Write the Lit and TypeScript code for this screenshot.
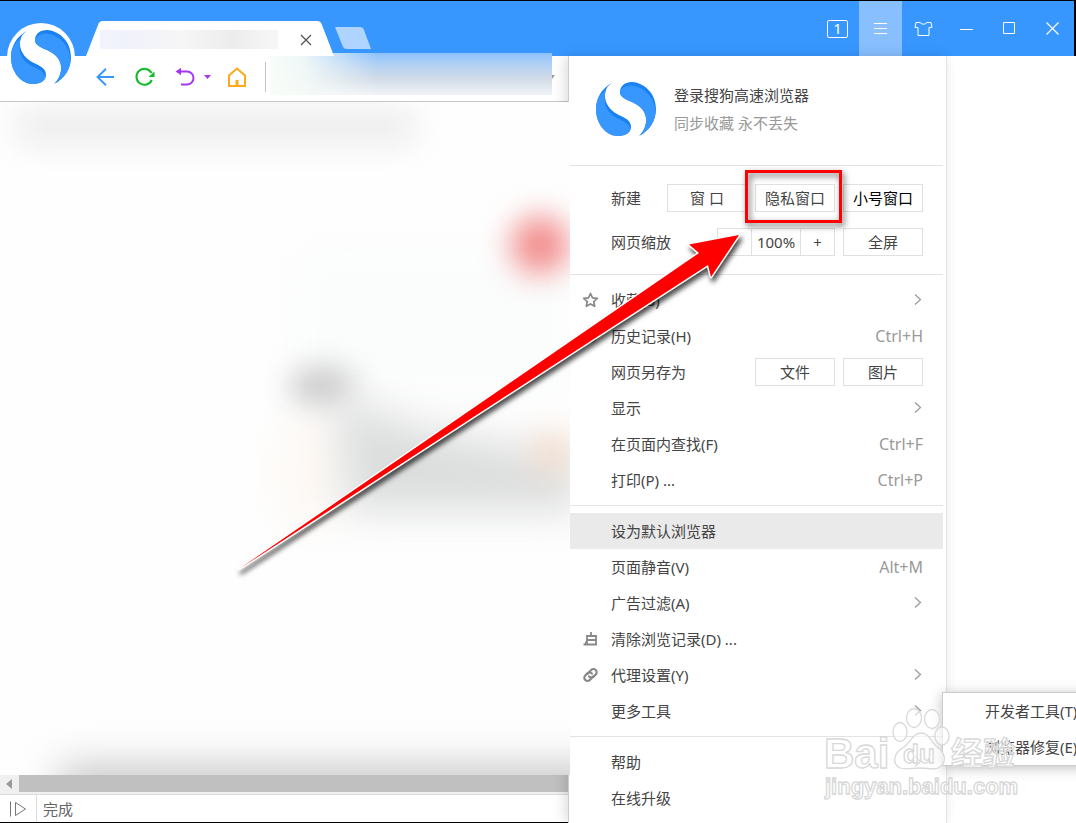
import { LitElement, html, svg, css, nothing } from "lit";
import { customElement, property } from "lit/decorators.js";

type Item = {
  label: string;
  icon?: unknown;
  key?: string;
  more?: boolean;
  active?: boolean;
};

const star = svg`<path d="M8 1.500l2 4.400 4.800.5-3.600 3.200 1 4.700L8 11.900l-4.200 2.400 1-4.700L1.200 6.400l4.800-.5z" fill="none" stroke="#888" stroke-width="1.700" stroke-linejoin="round"/>`;
const clock = svg`<circle cx="8" cy="8" r="6" fill="none" stroke="#888" stroke-width="1.800"/><path d="M8 4v4h3" fill="none" stroke="#888" stroke-width="1.500"/>`;
const brush = svg`<path d="M8.500 1v4M4.500 13V5h9v8M4.500 9h9M1 13.500H14.500M4.500 10L2.500 13.500" fill="none" stroke="#888" stroke-width="1.800"/>`;
const link = svg`<g transform="rotate(-45 8 8)" fill="none" stroke="#888" stroke-width="2.200" stroke-linecap="round"><path d="M9.500 11H4a3.200 3.200 0 0 1 0-6.400h3a3.200 3.200 0 0 1 3 3.400"/><path d="M6.500 5h5.500a3.200 3.200 0 0 1 0 6.400h-3a3.200 3.200 0 0 1-3-3.400"/></g>`;

@customElement("s-logo")
export class SLogo extends LitElement {
  static styles = css`
    :host {
      display: block;
      line-height: 0;
    }
  `;
  render() {
    const shape =
      "M16 1C6 6 0 16 0 27C0 43 11 54 22 54C30 54 35 50 35 45C35 39 31 37 25 34C15 30 9 22 9 14C9 8 11 4 16 1ZM36 0C50 1 60 13 60 27C60 39 53 49 43 54C48 49 51 42 50 36C49 27 42 23 36 20C29 17 24 15 24 10C24 4 29 0 36 0Z";
    return html`<svg width="60" height="54" viewBox="0 0 60 54" aria-hidden="true">
      <clipPath id="c"><path d=${shape} /></clipPath>
      <path d=${shape} fill="#1a82f0" />
      <g clip-path="url(#c)"><path d=${shape} fill="#3797ff" stroke="#3797ff" transform="translate(-1 4)" /></g>
    </svg>`;
  }
}

@customElement("menu-row")
export class MenuRow extends LitElement {
  @property({ attribute: false }) item!: Item;
  static styles = css`
    :host {
      display: block;
    }
    .row {
      display: flex;
      align-items: center;
      width: 100%;
      height: 36px;
      padding: 0 20px 0 12px;
      border: 0;
      background: none;
      font: inherit;
      color: #444;
      text-align: left;
    }
    .active {
      background: #eaeaea;
    }
    .icon {
      width: 17px;
      height: 16px;
      margin-right: 12px;
    }
    .label {
      flex: 1;
      white-space: nowrap;
    }
    .key {
      color: #999;
      font-size: 16px;
    }
  `;
  render() {
    const i = this.item;
    return html`<button class="row ${i.active ? "active" : ""}">
      <svg class="icon" viewBox="0 0 16 16" aria-hidden="true">${i.icon ?? nothing}</svg>
      <span class="label">${i.label}</span>
      ${i.key ? html`<span class="key">${i.key}</span>` : nothing}
      ${i.more
        ? html`<svg width="10" height="14" viewBox="0 0 10 14" aria-hidden="true">
            <path d="M2 1.500l5.500 5-5.500 5" fill="none" stroke="#999" stroke-width="1.200" />
          </svg>`
        : nothing}
    </button>`;
  }
}

@customElement("app-root")
export class AppRoot extends LitElement {
  static styles = css`
    :host {
      display: flex;
      flex-direction: column;
      position: relative;
      min-height: 100vh;
      box-sizing: border-box;
      overflow: hidden;
      background: #fff;
      color: #444;
      font: 15px/20px "Noto Sans", "Noto Sans CJK SC", sans-serif;
    }
    * {
      box-sizing: border-box;
    }
    button {
      font: inherit;
      color: inherit;
      padding: 0;
      border: 0;
      background: none;
    }
    svg {
      display: block;
    }
    .titlebar {
      display: flex;
      align-items: flex-end;
      height: 56px;
      padding-left: 86px;
      background: #3797ff;
      border-top: 1px solid #000;
      border-right: 2px solid #000;
    }
    .tab {
      display: flex;
      align-items: center;
      width: 249px;
      height: 35px;
      padding: 2px 20px 0 14px;
      background: #fff;
      clip-path: path("M0 35L12 4Q13 0 17 0H231Q235 0 236 4L248 35Z");
    }
    .tab-title {
      flex: 1;
      height: 19px;
      margin-right: 18px;
      background: linear-gradient(90deg, #f3f3fc, #f0f2fb 15%, #f6f6f6 45%, #ececec 75%, #f7f7f7);
    }
    .new-tab {
      height: 29px;
    }
    .new-tab svg {
      margin-bottom: 7px;
    }
    .window {
      display: flex;
      align-self: stretch;
      margin-left: auto;
    }
    .window button {
      display: grid;
      place-items: center;
      width: 43px;
    }
    .window .on {
      background: #87bfff;
    }
    .window .count {
      width: 21px;
      height: 18px;
      border: 1px solid #fff;
      border-radius: 2px;
      color: #fff;
      line-height: 15px;
      text-align: center;
    }
    .brand {
      position: absolute;
      left: 7px;
      top: 23px;
      width: 68px;
      height: 68px;
      padding: 7px 4px;
      border-radius: 50%;
      background: #fff;
      z-index: 1;
    }
    .body {
      display: flex;
      flex: 1;
    }
    .browser {
      display: flex;
      flex-direction: column;
      flex: 1;
      min-width: 0;
      border-bottom: 1px solid #000;
    }
    .toolbar {
      display: flex;
      align-items: center;
      height: 46px;
      padding: 0 12px 3px 93px;
      border-bottom: 1px solid #c6c6c6;
    }
    .tool {
      display: grid;
      place-items: center;
      width: 24px;
      height: 24px;
      margin-right: 16px;
    }
    .tool.tight {
      margin-right: 0;
    }
    .tool.caret {
      width: 20px;
      margin-right: 8px;
    }
    .address {
      flex: 1;
      min-width: 0;
      align-self: flex-start;
      height: 42px;
      margin-top: -3px;
      margin-left: 4px;
      border: 0;
      background: linear-gradient(90deg, #f8fdf8, rgba(246, 251, 248, 0.9) 12%, rgba(246, 251, 248, 0) 38%),
        linear-gradient(#8dc2fd, #b4d1f2 30%, #d2dce8 62%, #f1f4f8);
      outline: 0;
    }
    .sep {
      width: 1px;
      height: 30px;
      background: #c4c4c4;
    }
    .page {
      position: relative;
      flex: 1;
      margin-right: -2px;
      overflow: hidden;
      background: #fefefe;
      z-index: 1;
    }
    .page svg {
      position: absolute;
      inset: 0;
    }
    .scroll {
      display: flex;
      height: 19px;
      padding-bottom: 2px;
      background: #f0f0f0;
    }
    .scroll button {
      width: 19px;
      padding-left: 6px;
    }
    .thumb {
      flex: 1;
      background: #c0c0c0;
    }
    .status {
      display: flex;
      align-items: center;
      height: 28px;
      border-top: 1px solid #ddd;
      color: #666;
    }
    .status button {
      width: 37px;
      height: 27px;
      padding-left: 9px;
      margin-right: 6px;
      border-right: 1px solid #ddd;
    }
    .menu {
      position: relative;
      width: 379px;
      padding: 0 3px 0 1px;
      border-left: 1px solid #ccc;
      border-right: 1px solid #e3e3e3;
      background: #fff;
      box-shadow: -3px 0 12px rgba(0, 0, 0, 0.14);
    }
    .profile {
      display: flex;
      align-items: center;
      gap: 18px;
      height: 109px;
      padding: 0 26px 4px;
    }
    .profile p {
      margin: 0;
      line-height: 28px;
    }
    .muted {
      color: #999;
    }
    .group {
      border-top: 1px solid #e3e3e3;
      padding: 7px 0;
    }
    .quick {
      display: grid;
      gap: 16px;
      padding: 18px 0;
    }
    .line {
      display: flex;
      align-items: center;
      gap: 8px;
      padding: 0 20px 0 41px;
    }
    .save {
      height: 36px;
    }
    .line .name {
      flex: 1;
    }
    .box {
      position: relative;
      width: 80px;
      height: 28px;
      border: 1px solid #e0e0e0;
      line-height: 26px;
      white-space: nowrap;
    }
    .strong {
      color: #000;
    }
    .mark {
      position: absolute;
      inset: -15px -8px -12px -11px;
      border: 3px solid #f00;
      filter: drop-shadow(2px 3px 3px rgba(0, 0, 0, 0.65));
      z-index: 2;
      pointer-events: none;
    }
    .zoom {
      display: flex;
      width: 118px;
      height: 28px;
      border: 1px solid #e0e0e0;
      line-height: 26px;
      text-align: center;
    }
    .zoom button {
      width: 33px;
    }
    .zoom output {
      flex: 1;
      border: solid #e0e0e0;
      border-width: 0 1px;
    }
    .more {
      position: relative;
    }
    .submenu {
      position: absolute;
      left: 100%;
      top: -1px;
      width: 200px;
      margin-left: -1px;
      padding-left: 1px;
      border: 1px solid #ccc;
      background: #fff;
      box-shadow: 0 2px 12px rgba(0, 0, 0, 0.25);
      z-index: 2;
    }
    .rest {
      flex: 0 1 129px;
    }
    .arrow {
      position: absolute;
      right: 200px;
      top: 170px;
      z-index: 3;
      pointer-events: none;
    }
    .watermark {
      position: absolute;
      right: 55px;
      bottom: 18px;
      z-index: 4;
      pointer-events: none;
    }
    .watermark text {
      font-family: "Liberation Sans", "Noto Sans CJK SC", sans-serif;
      font-weight: 700;
    }
  `;

  private rows(items: Item[]) {
    return items.map((i) => html`<menu-row .item=${i}></menu-row>`);
  }

  private titlebar() {
    return html`<header class="titlebar">
      <div class="tab">
        <div class="tab-title"></div>
        <button aria-label="关闭标签页">
          <svg width="19" height="12" viewBox="-1 0 19 12">
            <path d="M4 1l10 10M14 1L4 11" stroke="#555" stroke-width="1.300" />
          </svg>
        </button>
      </div>
      <button class="new-tab" aria-label="新标签页">
        <svg width="36" height="22" viewBox="0 0 36 22">
          <path d="M0 0H25Q28 0 29 3L36 22H12Q9 22 8 20Z" fill="#afd4ff" />
        </svg>
      </button>
      <div class="window">
        <button aria-label="标签数"><span class="count">1</span></button>
        <button class="on" aria-label="菜单">
          <svg width="13" height="11"><path d="M0 .5h13M0 5.500h13M0 10.500h13" stroke="#fff" /></svg>
        </button>
        <button aria-label="皮肤">
          <svg width="19" height="16" viewBox="0 0 19 16">
            <path d="M6 1.500Q9.500 5 13 1.500L17 1.500L18 6.500H15V14.500H4V6.500H1L2 1.500Z" fill="none" stroke="#fff" />
          </svg>
        </button>
        <button aria-label="最小化">
          <svg width="13" height="2"><path d="M0 1.500h13" stroke="#fff" /></svg>
        </button>
        <button aria-label="最大化">
          <svg width="13" height="13"><path d="M.5 .5h11v11h-11z" fill="none" stroke="#fff" /></svg>
        </button>
        <button aria-label="关闭">
          <svg width="13" height="13"><path d="M.5 .5l12 12M12.500 .5l-12 12" stroke="#fff" stroke-width="1.200" /></svg>
        </button>
      </div>
    </header>`;
  }

  private toolbar() {
    return html`<nav class="toolbar">
      <button class="tool" aria-label="后退">
        <svg width="18" height="18" viewBox="0 0 18 18">
          <path d="M10 .7L1.500 9l8.500 8.300M1.500 9H18" fill="none" stroke="#3797ff" stroke-width="1.900" />
        </svg>
      </button>
      <button class="tool" aria-label="刷新">
        <svg width="20" height="20" viewBox="0 0 20 20">
          <path d="M16.800 13A8 8 0 1 1 16.500 6" fill="none" stroke="#0fbb28" stroke-width="2" />
          <path d="M19.500 4.500v5.500h-6z" fill="#0fbb28" />
        </svg>
      </button>
      <button class="tool tight" aria-label="撤销">
        <svg width="20" height="20" viewBox="0 0 20 20">
          <path d="M3 4.500H12a6.500 6.500 0 0 1 0 13H6" fill="none" stroke="#a437f5" stroke-width="2" />
          <path d="M.5 4.500L6 .8v7.400z" fill="#a437f5" />
        </svg>
      </button>
      <button class="tool caret" aria-label="更多历史">
        <svg width="7" height="4"><path d="M0 0h7L3.500 4z" fill="#a437f5" /></svg>
      </button>
      <button class="tool" aria-label="主页">
        <svg width="18" height="20" viewBox="0 0 18 20">
          <path d="M1 8.500L9 1.500l8 7V19H1z" fill="none" stroke="#ffa81c" stroke-width="2" />
          <path d="M7.500 13h3v6h-3z" fill="#ffa81c" />
        </svg>
      </button>
      <span class="sep"></span>
      <input class="address" aria-label="地址" />
      <svg width="4" height="4"><path d="M0 0h3L0 4z" fill="#999" /></svg>
    </nav>`;
  }

  private page() {
    return html`<main class="page">
      <svg width="100%" height="100%" aria-hidden="true" color-interpolation-filters="sRGB">
        <defs>
          <filter id="b" x="-200%" y="-200%" width="500%" height="500%"><feGaussianBlur stdDeviation="15" /></filter>
          <filter id="w" x="-100%" y="-100%" width="300%" height="300%"><feGaussianBlur stdDeviation="20" /></filter>
        </defs>
        <rect x="18" y="8" width="396" height="34" fill="#ececec" filter="url(#b)" />
        <rect x="300" y="150" width="270" height="140" fill="#fbfcfc" filter="url(#w)" />
        <circle cx="540" cy="143" r="29" fill="#f28c8c" filter="url(#b)" />
        <ellipse cx="322" cy="285" rx="32" ry="20" fill="#c8c8c8" filter="url(#b)" />
        <rect x="284" y="320" width="50" height="100" fill="#fdf7f2" filter="url(#w)" />
        <path d="M335 290L420 325L580 355V410H345Z" fill="#dcdedd" filter="url(#w)" />
        <circle cx="552" cy="350" r="22" fill="#f6d9c6" opacity=".7" filter="url(#b)" />
        <rect x="60" y="665" width="560" height="80" fill="#c4c4c4" filter="url(#w)" />
      </svg>
    </main>`;
  }

  private menu() {
    return html`<aside class="menu">
      <div class="profile">
        <s-logo></s-logo>
        <div>
          <p>登录搜狗高速浏览器</p>
          <p class="muted">同步收藏 永不丢失</p>
        </div>
      </div>
      <div class="group quick">
        <div class="line">
          <span class="name">新建</span>
          <button class="box">窗 口</button>
          <button class="box">隐私窗口<span class="mark"></span></button>
          <button class="box strong">小号窗口</button>
        </div>
        <div class="line">
          <span class="name">网页缩放</span>
          <div class="zoom">
            <button aria-label="缩小"></button>
            <output>100%</output>
            <button>+</button>
          </div>
          <button class="box">全屏</button>
        </div>
      </div>
      <div class="group">
        ${this.rows([
          { label: "收藏(B)", icon: star, more: true },
          { label: "历史记录(H)", icon: clock, key: "Ctrl+H" },
        ])}
        <div class="line save">
          <span class="name">网页另存为</span>
          <button class="box">文件</button>
          <button class="box">图片</button>
        </div>
        ${this.rows([
          { label: "显示", more: true },
          { label: "在页面内查找(F)", key: "Ctrl+F" },
          { label: "打印(P) ...", key: "Ctrl+P" },
        ])}
      </div>
      <div class="group">
        ${this.rows([
          { label: "设为默认浏览器", active: true },
          { label: "页面静音(V)", key: "Alt+M" },
          { label: "广告过滤(A)", more: true },
          { label: "清除浏览记录(D) ...", icon: brush },
          { label: "代理设置(Y)", icon: link, more: true },
        ])}
        <div class="more">
          ${this.rows([{ label: "更多工具", more: true }])}
          <div class="submenu">${this.rows([{ label: "开发者工具(T)" }, { label: "浏览器修复(E)" }])}</div>
        </div>
      </div>
      <div class="group">${this.rows([{ label: "帮助", more: true }, { label: "在线升级" }])}</div>
      <svg class="arrow" width="516" height="356" viewBox="230 226 516 356" aria-hidden="true">
        <filter id="s" x="-5%" y="-5%" width="112%" height="112%" color-interpolation-filters="sRGB">
          <feDropShadow dx="2" dy="4" stdDeviation="2.500" flood-opacity=".7" />
        </filter>
        <path
          d="M239 569L699 253L689 244.500L739 235L711 277L708 265Z"
          fill="#f00"
          stroke="#fff"
          stroke-width="3"
          paint-order="stroke"
          stroke-linejoin="round"
          filter="url(#s)"
        />
      </svg>
    </aside>`;
  }

  private watermark() {
    return html`<svg class="watermark" width="200" height="100" viewBox="822 705 200 100">
      <g fill="#fff" fill-opacity=".6" stroke="#d8d8d8" stroke-width="1.300">
        <text x="825" y="768" font-size="42">Bai</text>
        <ellipse cx="901" cy="732" rx="7" ry="9.500" />
        <ellipse cx="915" cy="718" rx="7.500" ry="9.500" />
        <ellipse cx="933" cy="719" rx="7.500" ry="9.500" />
        <ellipse cx="943" cy="736" rx="7" ry="9" />
        <path
          d="M922 733C914 733 912 742 905 747C894 753 893 764 901 768C907 770 914 768 921 768C929 768 934 770 939 768C948 764 947 753 939 748C932 742 930 733 922 733Z"
        />
        <text x="904" y="763" font-size="26">du</text>
        <text x="952" y="765" font-size="32">经验</text>
        <text x="826" y="794" font-size="22">jingyan.baidu.com</text>
      </g>
    </svg>`;
  }

  render() {
    return html`
      ${this.titlebar()}
      <s-logo class="brand"></s-logo>
      <div class="body">
        <section class="browser">
          ${this.toolbar()} ${this.page()}
          <div class="scroll">
            <button aria-label="向左滚动">
              <svg width="6" height="10"><path d="M6 0v10L0 5z" fill="#999" /></svg>
            </button>
            <div class="thumb"></div>
          </div>
          <footer class="status">
            <button aria-label="侧边栏">
              <svg width="18" height="16" viewBox="0 0 18 16">
                <path d="M1.500 .5v15M6.500 1.500v13L16.500 8z" fill="none" stroke="#777" />
              </svg>
            </button>
            <span>完成</span>
          </footer>
        </section>
        ${this.menu()}
        <div class="rest"></div>
      </div>
      ${this.watermark()}
    `;
  }
}
